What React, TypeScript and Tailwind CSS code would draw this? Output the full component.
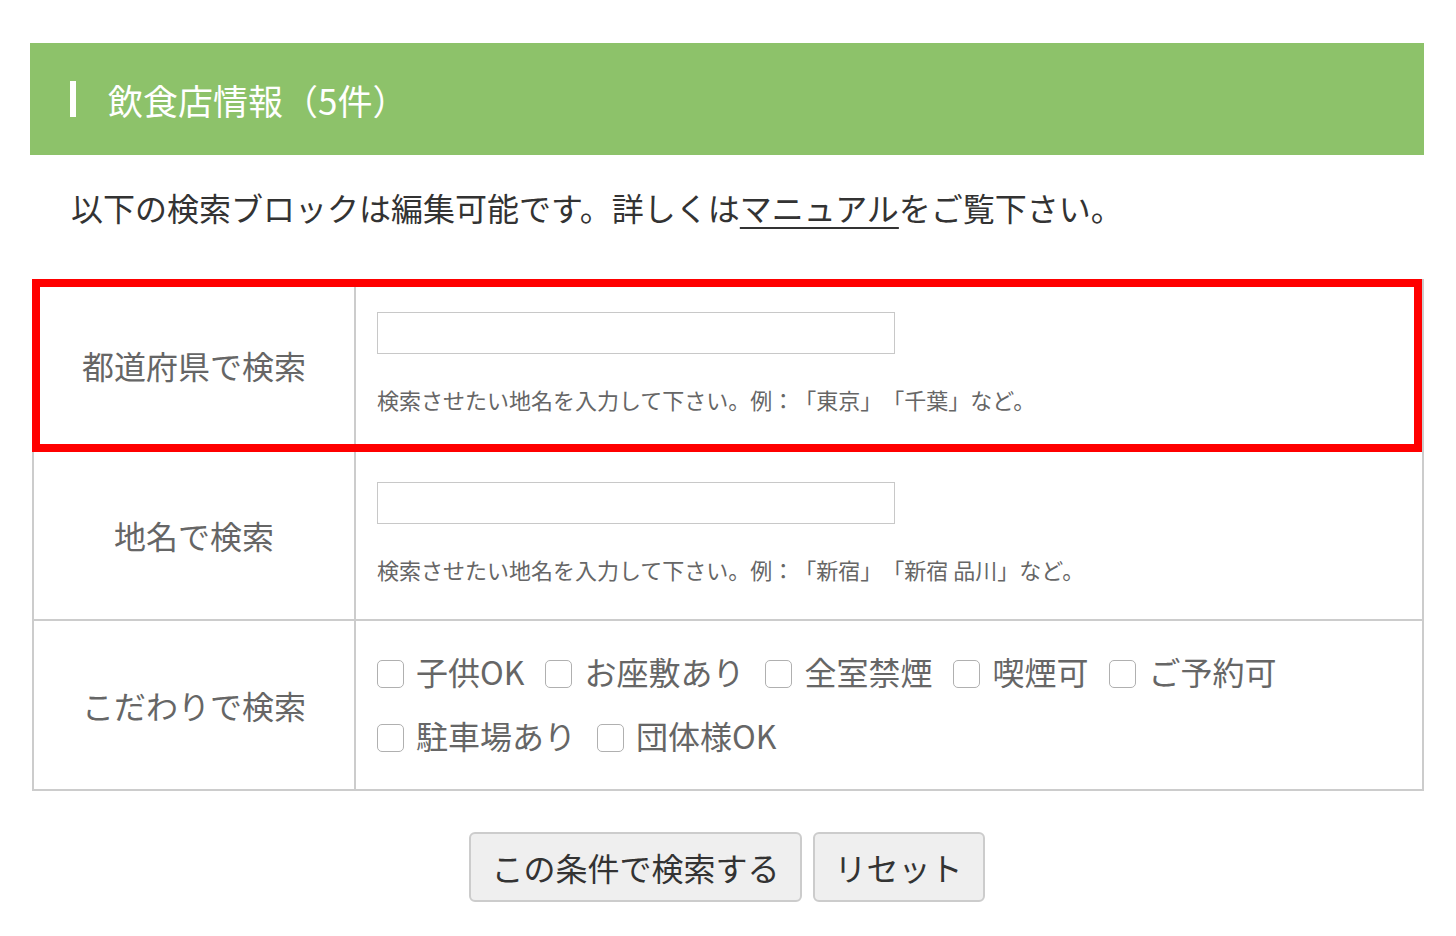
const font = { fontFamily: '"Noto Sans CJK JP", "Noto Sans", sans-serif' }

const options = [
  ['子供OK', 'お座敷あり', '全室禁煙', '喫煙可', 'ご予約可'],
  ['駐車場あり', '団体様OK'],
]

function SearchRow({ label, hint, first }: { label: string; hint: string; first?: boolean }) {
  return (
    <div className={first ? 'flex h-[168px]' : 'flex h-[170px] border-t-2 border-[#cccccc]'}>
      <div className="w-[322px] shrink-0 border-r-2 border-[#cccccc] flex items-center justify-center text-[32px] text-[#666666]">
        {label}
      </div>
      <div className="flex-1 pl-[21px] pt-[31px]">
        <input type="text" className="block w-[518px] h-[42px] border border-[#c8c8c8] bg-white outline-none" />
        <p className="mt-[29px] text-[22px] leading-[33px] text-[#666666]">{hint}</p>
      </div>
    </div>
  )
}

export default function App() {
  return (
    <div className="min-h-screen bg-white pt-[43px] [text-spacing-trim:space-all]" style={font}>
      <div className="ml-[30px] w-[1394px]">
        {/* Heading */}
        <div className="h-[112px] bg-[#8dc26a] flex items-center pl-[40px]">
          <span className="w-[6px] h-[36px] bg-white" />
          <h2 className="ml-[32px] text-[35px] text-white leading-none">
            飲食店情報<span className="inline-block w-[1em] text-right">（</span>5件
            <span className="inline-block w-[1em] text-left">）</span>
          </h2>
        </div>

        <p className="mt-[28px] pl-[41px] text-[32px] leading-[48px] text-[#333333]">
          以下の検索ブロックは編集可能です。詳しくは
          <a href="#" className="underline underline-offset-[6px] decoration-[2px]">マニュアル</a>
          をご覧下さい。
        </p>

        {/* Search table */}
        <div className="relative mt-[48px] ml-[2px] border-2 border-[#cccccc]">
          <SearchRow first label="都道府県で検索" hint="検索させたい地名を入力して下さい。例：「東京」「千葉」など。" />
          <SearchRow label="地名で検索" hint="検索させたい地名を入力して下さい。例：「新宿」「新宿 品川」など。" />
          <div className="flex h-[170px] border-t-2 border-[#cccccc]">
            <div className="w-[322px] shrink-0 border-r-2 border-[#cccccc] flex items-center justify-center text-[32px] text-[#666666]">
              こだわりで検索
            </div>
            <div className="flex-1 pl-[21px] pt-[18px]">
              {options.map((line, i) => (
                <div key={i} className="flex items-center h-[64px]">
                  {line.map((opt) => (
                    <label key={opt} className="flex items-center mr-[21px] text-[32px] text-[#666666]">
                      <input
                        type="checkbox"
                        className="appearance-none w-[27px] h-[28px] mt-[6px] border border-[#b0b0b0] rounded-[5px] bg-white"
                      />
                      <span className="ml-[12px]">{opt}</span>
                    </label>
                  ))}
                </div>
              ))}
            </div>
          </div>

          {/* Highlight */}
          <div className="absolute -top-[2px] -left-[2px] w-[1390px] h-[173px] border-[8px] border-[#ff0000] pointer-events-none" />
        </div>

        <div className="mt-[41px] flex justify-center gap-[11px]">
          <button className="h-[70px] px-[20px] border-2 border-[#cccccc] rounded-[6px] bg-[#efefef] text-[32px] text-[#333333]">
            この条件で検索する
          </button>
          <button className="h-[70px] px-[20px] border-2 border-[#cccccc] rounded-[6px] bg-[#efefef] text-[32px] text-[#333333]">
            リセット
          </button>
        </div>
      </div>
    </div>
  )
}
